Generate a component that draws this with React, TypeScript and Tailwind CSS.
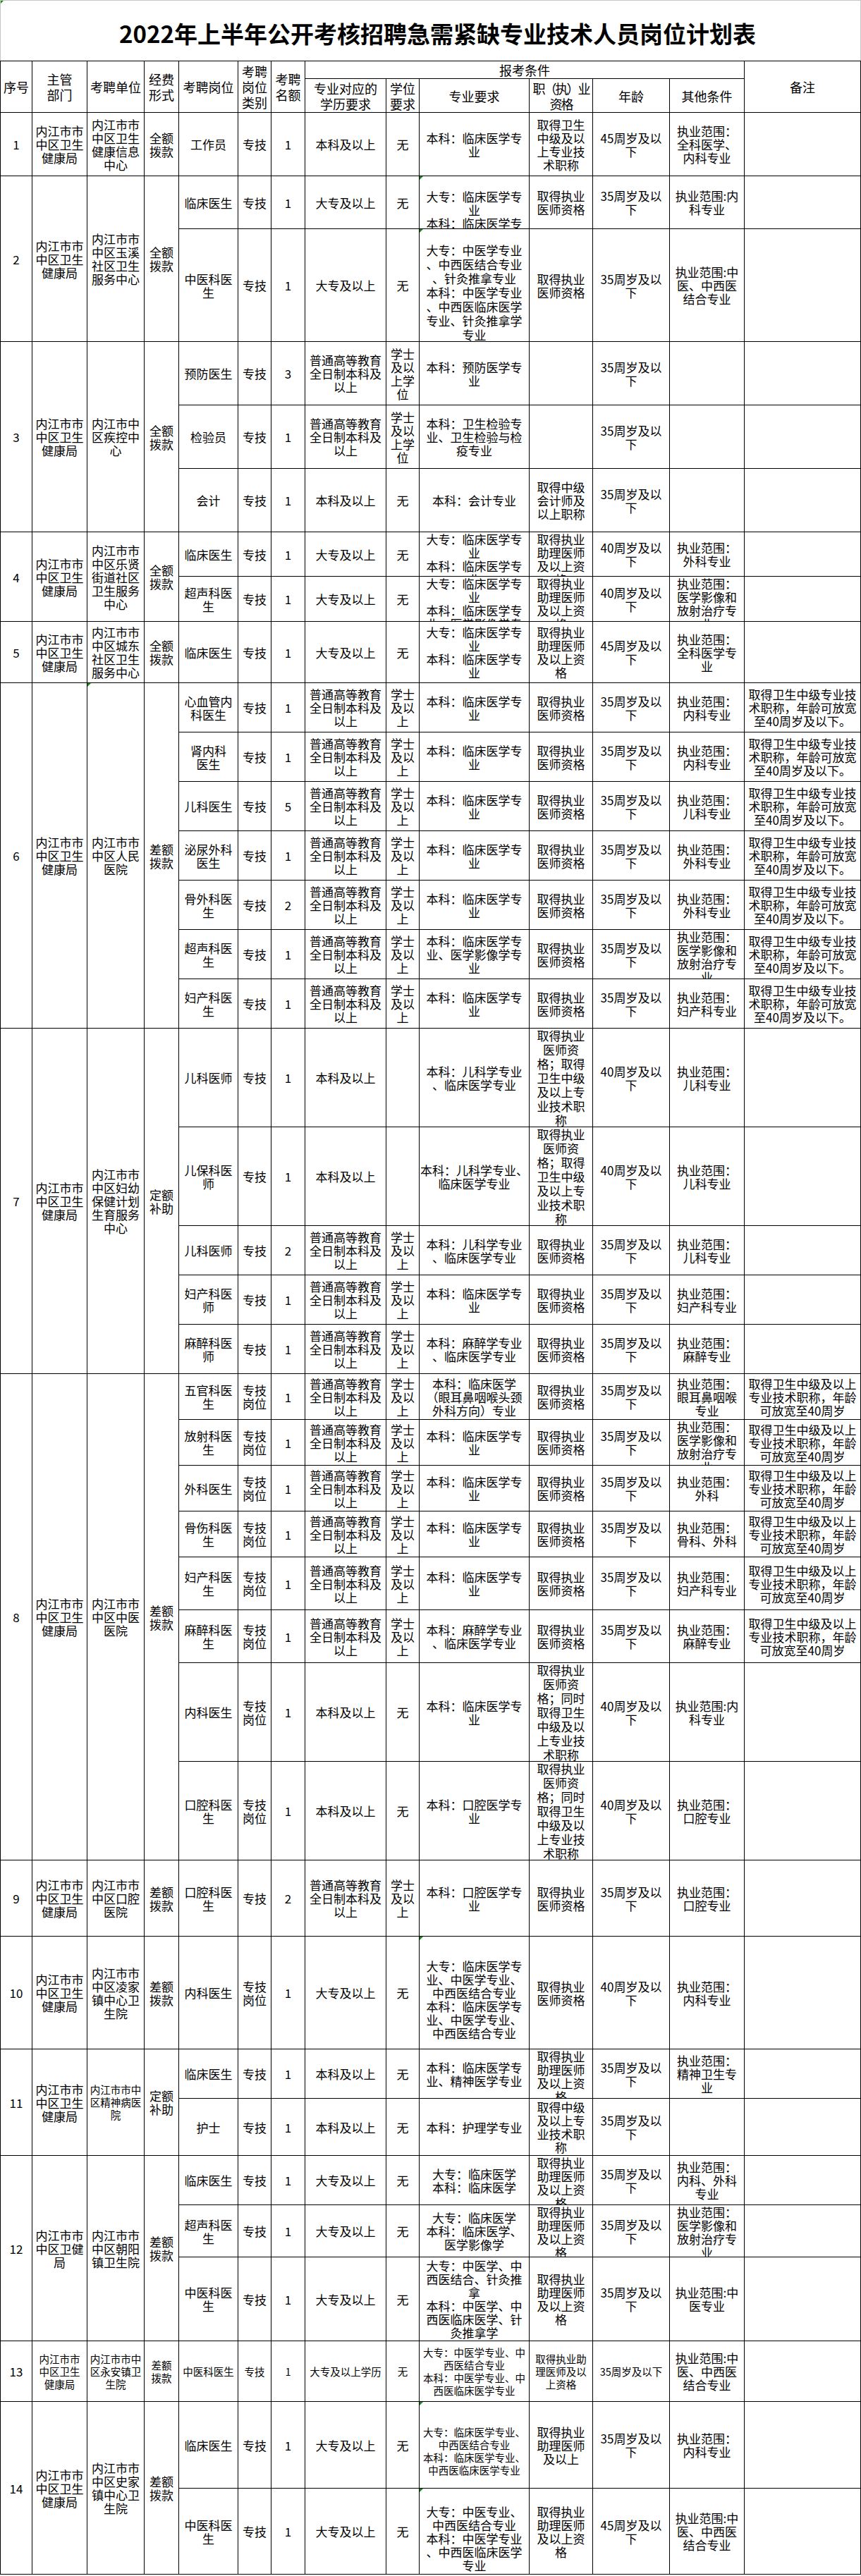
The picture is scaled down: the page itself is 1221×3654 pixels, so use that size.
import clsx from "clsx";

type Cell = {
  t: string;
  rs?: number;
  cs?: number;
  tri?: boolean;
  sm?: boolean;
  lh?: boolean;
  head?: boolean;
  tight?: boolean;
};

const c = (t: string, o: Partial<Cell> = {}): Cell => ({ t, ...o });
const h = (t: string, o: Partial<Cell> = {}): Cell => ({ t, head: true, ...o });

const rowSpan: Record<number, string> = {
  1: "",
  2: "row-span-2",
  3: "row-span-3",
  5: "row-span-5",
  7: "row-span-7",
  8: "row-span-8",
};

// reused texts
const JKJ = "内江市市\n中区卫生\n健康局";
const P3 = "普通高等教育\n全日制本科及\n以上";
const XS = "学士\n及以\n上";
const XW = "学士\n及以\n上学\n位";
const Y35 = "35周岁及以\n下";
const Y40 = "40周岁及以\n下";
const Y45 = "45周岁及以\n下";
const YS = "取得执业\n医师资格";
const ZL = "取得执业\n助理医师\n及以上资\n格";
const LC = "本科：临床医学专\n业";
const ZC1 = "取得执业\n医师资\n格；取得\n卫生中级\n及以上专\n业技术职\n称";
const ZC2 = "取得执业\n医师资\n格；同时\n取得卫生\n中级及以\n上专业技\n术职称";
const M6 = "取得卫生中级专业技\n术职称，年龄可放宽\n至40周岁及以下。";
const M8 = "取得卫生中级及以上\n专业技术职称，年龄\n可放宽至40周岁";
const YX = "执业范围：\n医学影像和\n放射治疗专\n业";

const cells: Cell[] = [
  // header
  h("序号", { rs: 2 }),
  h("主管\n部门", { rs: 2 }),
  h("考聘单位", { rs: 2 }),
  h("经费\n形式", { rs: 2 }),
  h("考聘岗位", { rs: 2 }),
  h("考聘\n岗位\n类别", { rs: 2 }),
  h("考聘\n名额", { rs: 2 }),
  h("报考条件", { cs: 6 }),
  h("备注", { rs: 2 }),
  h("专业对应的\n学历要求"),
  h("学位\n要求"),
  h("专业要求"),
  h("职（执）业\n资格", { tight: true }),
  h("年龄"),
  h("其他条件"),

  // 1
  c("1"),
  c(JKJ),
  c("内江市市\n中区卫生\n健康信息\n中心"),
  c("全额\n拨款"),
  c("工作员"),
  c("专技"),
  c("1"),
  c("本科及以上"),
  c("无"),
  c(LC),
  c("取得卫生\n中级及以\n上专业技\n术职称"),
  c(Y45),
  c("执业范围：\n全科医学、\n内科专业"),
  c(""),

  // 2
  c("2", { rs: 2 }),
  c(JKJ, { rs: 2 }),
  c("内江市市\n中区玉溪\n社区卫生\n服务中心", { rs: 2 }),
  c("全额\n拨款", { rs: 2 }),
  c("临床医生"),
  c("专技"),
  c("1"),
  c("大专及以上"),
  c("无"),
  c("\n大专：临床医学专\n业\n本科：临床医学专\n业", { tri: true }),
  c(YS),
  c(Y35),
  c("执业范围:内\n科专业"),
  c(""),
  c("中医科医\n生"),
  c("专技"),
  c("1"),
  c("大专及以上"),
  c("无"),
  c(
    "\n大专：中医学专业\n、中西医结合专业\n、针灸推拿专业\n本科：中医学专业\n、中西医临床医学\n专业、针灸推拿学\n专业",
    { tri: true, lh: true }
  ),
  c(YS),
  c(Y35),
  c("执业范围:中\n医、中西医\n结合专业"),
  c(""),

  // 3
  c("3", { rs: 3 }),
  c(JKJ, { rs: 3 }),
  c("内江市中\n区疾控中\n心", { rs: 3 }),
  c("全额\n拨款", { rs: 3 }),
  c("预防医生"),
  c("专技"),
  c("3"),
  c(P3),
  c(XW),
  c("本科：预防医学专\n业"),
  c(""),
  c(Y35),
  c(""),
  c(""),
  c("检验员"),
  c("专技"),
  c("1"),
  c(P3),
  c(XW),
  c("本科：卫生检验专\n业、卫生检验与检\n疫专业"),
  c(""),
  c(Y35),
  c(""),
  c(""),
  c("会计"),
  c("专技"),
  c("1"),
  c("本科及以上"),
  c("无"),
  c("本科：会计专业"),
  c("取得中级\n会计师及\n以上职称"),
  c(Y35),
  c(""),
  c(""),

  // 4
  c("4", { rs: 2 }),
  c(JKJ, { rs: 2 }),
  c("内江市市\n中区乐贤\n街道社区\n卫生服务\n中心", { rs: 2 }),
  c("全额\n拨款", { rs: 2 }),
  c("临床医生"),
  c("专技"),
  c("1"),
  c("大专及以上"),
  c("无"),
  c("大专：临床医学专\n业\n本科：临床医学专\n业"),
  c(ZL),
  c(Y40),
  c("执业范围：\n外科专业"),
  c(""),
  c("超声科医\n生"),
  c("专技"),
  c("1"),
  c("大专及以上"),
  c("无"),
  c("大专：临床医学专\n业\n本科：临床医学专\n业、医学影像学专\n业"),
  c(ZL),
  c(Y40),
  c(YX),
  c(""),

  // 5
  c("5"),
  c(JKJ),
  c("内江市市\n中区城东\n社区卫生\n服务中心"),
  c("全额\n拨款"),
  c("临床医生"),
  c("专技"),
  c("1"),
  c("大专及以上"),
  c("无"),
  c("大专：临床医学专\n业\n本科：临床医学专\n业"),
  c(ZL),
  c(Y45),
  c("执业范围：\n全科医学专\n业"),
  c(""),

  // 6
  c("6", { rs: 7 }),
  c(JKJ, { rs: 7 }),
  c("内江市市\n中区人民\n医院", { rs: 7, tri: true }),
  c("差额\n拨款", { rs: 7 }),
  ...(
    [
      ["心血管内\n科医生", "1", LC, "执业范围：\n内科专业"],
      ["肾内科\n医生", "1", LC, "执业范围：\n内科专业"],
      ["儿科医生", "5", LC, "执业范围：\n儿科专业"],
      ["泌尿外科\n医生", "1", LC, "执业范围：\n外科专业"],
      ["骨外科医\n生", "2", LC, "执业范围：\n外科专业"],
      ["超声科医\n生", "1", "本科：临床医学专\n业、医学影像学专\n业", YX],
      ["妇产科医\n生", "1", LC, "执业范围：\n妇产科专业"],
    ] as const
  ).flatMap(([post, n, major, other]) => [
    c(post),
    c("专技"),
    c(n),
    c(P3),
    c(XS),
    c(major),
    c(YS),
    c(Y35),
    c(other),
    c(M6),
  ]),

  // 7
  c("7", { rs: 5 }),
  c(JKJ, { rs: 5 }),
  c("内江市市\n中区妇幼\n保健计划\n生育服务\n中心", { rs: 5 }),
  c("定额\n补助", { rs: 5 }),
  c("儿科医师"),
  c("专技"),
  c("1"),
  c("本科及以上"),
  c(""),
  c("本科：儿科学专业\n、临床医学专业"),
  c(ZC1, { lh: true }),
  c(Y40),
  c("执业范围：\n儿科专业"),
  c(""),
  c("儿保科医\n师"),
  c("专技"),
  c("1"),
  c("本科及以上"),
  c(""),
  c("本科：儿科学专业、\n临床医学专业"),
  c(ZC1, { lh: true }),
  c(Y40),
  c("执业范围：\n儿科专业"),
  c(""),
  ...(
    [
      ["儿科医师", "2", "本科：儿科学专业\n、临床医学专业", "执业范围：\n儿科专业"],
      ["妇产科医\n师", "1", LC, "执业范围：\n妇产科专业"],
      ["麻醉科医\n师", "1", "本科：麻醉学专业\n、临床医学专业", "执业范围：\n麻醉专业"],
    ] as const
  ).flatMap(([post, n, major, other]) => [
    c(post),
    c("专技"),
    c(n),
    c(P3),
    c(XS),
    c(major),
    c(YS),
    c(Y35),
    c(other),
    c(""),
  ]),

  // 8
  c("8", { rs: 8 }),
  c(JKJ, { rs: 8 }),
  c("内江市市\n中区中医\n医院", { rs: 8 }),
  c("差额\n拨款", { rs: 8 }),
  ...(
    [
      ["五官科医\n生", "本科：临床医学\n（眼耳鼻咽喉头颈\n外科方向）专业", "执业范围：\n眼耳鼻咽喉\n专业"],
      ["放射科医\n生", LC, YX],
      ["外科医生", LC, "执业范围：\n外科"],
      ["骨伤科医\n生", LC, "执业范围：\n骨科、外科"],
      ["妇产科医\n生", LC, "执业范围：\n妇产科专业"],
      ["麻醉科医\n生", "本科：麻醉学专业\n、临床医学专业", "执业范围：\n麻醉专业"],
    ] as const
  ).flatMap(([post, major, other]) => [
    c(post),
    c("专技\n岗位"),
    c("1"),
    c(P3),
    c(XS),
    c(major),
    c(YS),
    c(Y35),
    c(other),
    c(M8),
  ]),
  c("内科医生"),
  c("专技\n岗位"),
  c("1"),
  c("本科及以上"),
  c("无"),
  c(LC),
  c(ZC2, { lh: true }),
  c(Y40),
  c("执业范围:内\n科专业"),
  c(""),
  c("口腔科医\n生"),
  c("专技\n岗位"),
  c("1"),
  c("本科及以上"),
  c("无"),
  c("本科：口腔医学专\n业"),
  c(ZC2, { lh: true }),
  c(Y40),
  c("执业范围：\n口腔专业"),
  c(""),

  // 9
  c("9"),
  c(JKJ),
  c("内江市市\n中区口腔\n医院"),
  c("差额\n拨款"),
  c("口腔科医\n生"),
  c("专技"),
  c("2"),
  c(P3),
  c(XS),
  c("本科：口腔医学专\n业"),
  c(YS),
  c(Y35),
  c("执业范围：\n口腔专业"),
  c(""),

  // 10
  c("10"),
  c(JKJ),
  c("内江市市\n中区凌家\n镇中心卫\n生院"),
  c("差额\n拨款"),
  c("内科医生"),
  c("专技\n岗位"),
  c("1"),
  c("大专及以上"),
  c("无"),
  c(
    "\n大专：临床医学专\n业、中医学专业、\n中西医结合专业\n本科：临床医学专\n业、中医学专业、\n中西医结合专业",
    { tri: true }
  ),
  c(YS),
  c(Y40),
  c("执业范围：\n内科专业"),
  c(""),

  // 11
  c("11", { rs: 2 }),
  c(JKJ, { rs: 2 }),
  c("内江市市中\n区精神病医\n院", { rs: 2, sm: true }),
  c("定额\n补助", { rs: 2 }),
  c("临床医生"),
  c("专技"),
  c("1"),
  c("本科及以上"),
  c("无"),
  c("本科：临床医学专\n业、精神医学专业"),
  c(ZL),
  c(Y35),
  c("执业范围：\n精神卫生专\n业"),
  c(""),
  c("护士"),
  c("专技"),
  c("1"),
  c("本科及以上"),
  c("无"),
  c("本科：护理学专业"),
  c("取得中级\n及以上专\n业技术职\n称"),
  c(Y35),
  c(""),
  c(""),

  // 12
  c("12", { rs: 3 }),
  c("内江市市\n中区卫健\n局", { rs: 3 }),
  c("内江市市\n中区朝阳\n镇卫生院", { rs: 3 }),
  c("差额\n拨款", { rs: 3 }),
  c("临床医生"),
  c("专技"),
  c("1"),
  c("大专及以上"),
  c("无"),
  c("大专：临床医学\n本科：临床医学"),
  c(ZL),
  c(Y35),
  c("执业范围：\n内科、外科\n专业"),
  c(""),
  c("超声科医\n生"),
  c("专技"),
  c("1"),
  c("大专及以上"),
  c("无"),
  c("大专：临床医学\n本科：临床医学、\n医学影像学"),
  c(ZL),
  c(Y35),
  c(YX),
  c(""),
  c("中医科医\n生"),
  c("专技"),
  c("1"),
  c("大专及以上"),
  c("无"),
  c("大专：中医学、中\n西医结合、针灸推\n拿\n本科：中医学、中\n西医临床医学、针\n灸推拿学"),
  c(ZL),
  c(Y35),
  c("执业范围:中\n医专业"),
  c(""),

  // 13
  c("13"),
  c("内江市市\n中区卫生\n健康局", { sm: true }),
  c("内江市市中\n区永安镇卫\n生院", { sm: true }),
  c("差额\n拨款", { sm: true }),
  c("中医科医生", { sm: true }),
  c("专技", { sm: true }),
  c("1", { sm: true }),
  c("大专及以上学历", { sm: true }),
  c("无", { sm: true }),
  c("大专：中医学专业、中\n西医结合专业\n本科：中医学专业、中\n西医临床医学专业", { sm: true }),
  c("取得执业助\n理医师及以\n上资格", { sm: true }),
  c("35周岁及以下", { sm: true }),
  c("执业范围:中\n医、中西医\n结合专业"),
  c(""),

  // 14
  c("14", { rs: 2 }),
  c(JKJ, { rs: 2 }),
  c("内江市市\n中区史家\n镇中心卫\n生院", { rs: 2 }),
  c("差额\n拨款", { rs: 2 }),
  c("临床医生"),
  c("专技"),
  c("1"),
  c("大专及以上"),
  c("无"),
  c("\n大专：临床医学专业、\n中西医结合专业\n本科：临床医学专业、\n中西医临床医学专业", { tri: true, sm: true }),
  c("取得执业\n助理医师\n及以上"),
  c(Y35),
  c("执业范围：\n内科专业"),
  c(""),
  c("中医科医\n生"),
  c("专技"),
  c("1"),
  c("大专及以上"),
  c("无"),
  c("\n大专：中医专业、\n中西医结合专业\n本科：中医学专业\n、中西医临床医学\n专业", { tri: true }),
  c(ZL),
  c(Y45),
  c("执业范围:中\n医、中西医\n结合专业"),
  c(""),
];

function GridCell({ cell }: { cell: Cell }) {
  return (
    <div
      className={clsx(
        "relative flex justify-center overflow-hidden border-r border-b border-black px-[2px] text-center whitespace-pre [align-items:safe_center]",
        rowSpan[cell.rs ?? 1],
        cell.cs === 6 && "col-span-6",
        cell.head
          ? "text-[18px] leading-[22px]"
          : cell.sm
            ? "text-[14.5px] leading-[18px]"
            : cell.lh
              ? "text-[17px] leading-[20px]"
              : "text-[17px] leading-[19px]",
        cell.tight && "tracking-[-2px]"
      )}
    >
      {cell.tri && (
        <span className="absolute left-0 top-0 h-0 w-0 border-t-[5px] border-r-[5px] border-t-[#138a13] border-r-transparent" />
      )}
      <div>{cell.t}</div>
    </div>
  );
}

export default function App() {
  return (
    <div className="w-[1221px] bg-white text-black font-['Noto_Sans_CJK_SC','Noto_Sans',sans-serif]">
      <div className="relative flex h-[86px] items-center justify-center border-x border-t border-[#c6c6c6] pl-[20px] pt-[6px]">
        <span className="absolute left-0 top-0 h-0 w-0 border-t-[4px] border-r-[4px] border-t-[#138a13] border-r-transparent" />
        <h1 className="text-[33px] leading-[40px] font-bold">
          2022年上半年公开考核招聘急需紧缺专业技术人员岗位计划表
        </h1>
      </div>
      <div className="grid grid-cols-[45px_78px_81px_49px_84px_47px_48px_115px_47px_156px_90px_109px_106px_165px] grid-rows-[25px_48px_90px_75px_160px_90px_90px_90px_63px_64px_87px_70px_70px_70px_70px_70px_70px_70px_140px_140px_70px_70px_70px_65px_65px_65px_65px_75px_75px_140px_140px_108px_160px_70px_81px_70px_74px_119px_86px_123px_122px] border-l border-t border-black">
        {cells.map((cell, i) => (
          <GridCell key={i} cell={cell} />
        ))}
      </div>
    </div>
  );
}
